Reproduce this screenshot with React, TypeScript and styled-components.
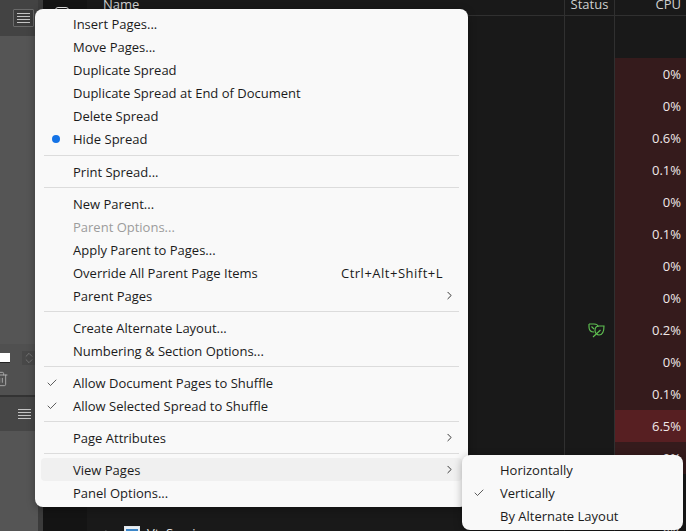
import { Fragment } from "react";
import styled, { createGlobalStyle } from "styled-components";
import { Check, ChevronRight, ChevronsUpDown, Trash2 } from "lucide-react";

type MenuEntry = {
  label: string;
  disabled?: boolean;
  mark?: "dot" | "check";
  shortcut?: string;
  submenu?: boolean;
  active?: boolean;
};

const menuGroups: MenuEntry[][] = [
  [
    { label: "Insert Pages..." },
    { label: "Move Pages..." },
    { label: "Duplicate Spread" },
    { label: "Duplicate Spread at End of Document" },
    { label: "Delete Spread" },
    { label: "Hide Spread", mark: "dot" },
  ],
  [{ label: "Print Spread..." }],
  [
    { label: "New Parent..." },
    { label: "Parent Options...", disabled: true },
    { label: "Apply Parent to Pages..." },
    { label: "Override All Parent Page Items", shortcut: "Ctrl+Alt+Shift+L" },
    { label: "Parent Pages", submenu: true },
  ],
  [{ label: "Create Alternate Layout..." }, { label: "Numbering & Section Options..." }],
  [
    { label: "Allow Document Pages to Shuffle", mark: "check" },
    { label: "Allow Selected Spread to Shuffle", mark: "check" },
  ],
  [{ label: "Page Attributes", submenu: true }],
  [{ label: "View Pages", submenu: true, active: true }, { label: "Panel Options..." }],
];

const cpuValues = ["0%", "0%", "0.6%", "0.1%", "0%", "0.1%", "0%", "0%", "0.2%", "0%", "0.1%", "6.5%", "0%", "0%"];

function LeafIcon() {
  return (
    <LeafSvg width="17" height="15" viewBox="0 0 17 15" fill="none" stroke="#5fc052" strokeWidth="1.15">
      <path d="M1 1h5c3 0 4 1.500 4 3" />
      <path d="M1 1v3c0 3 2 5 5 5" />
      <path d="M3.500 3.500L6 6" />
      <path d="M16 3h-5C8 3 7 5 7 7.500 7 10 9 12 11 12c3 0 5-3 5-9z" />
      <path d="M5 14l7.500-7" />
    </LeafSvg>
  );
}

function ServiceIcon() {
  return (
    <svg width="16" height="14" viewBox="0 0 16 14">
      <rect x="0.500" y="0.500" width="15" height="13" fill="#e8eef4" stroke="#dfe5ea" />
      <rect x="2" y="3" width="12" height="9" fill="#3b86c8" />
      <rect x="4" y="5" width="3" height="3" fill="#e8eef4" />
    </svg>
  );
}

function HamburgerLines() {
  return (
    <Lines>
      <i />
      <i />
      <i />
      <i />
    </Lines>
  );
}

export default function App() {
  return (
    <Screen>
      <GlobalStyle />
      <SidePanel>
        <PanelBar>
          <BoxedButton>
            <HamburgerLines />
          </BoxedButton>
        </PanelBar>
        <PanelBody $height={308} />
        <PanelControls>
          <InputRow>
            <PageInput />
            <Stepper>
              <ChevronsUpDown size={14} strokeWidth={1} />
            </Stepper>
          </InputRow>
          <TrashWrap>
            <Trash2 size={16} strokeWidth={1.3} />
          </TrashWrap>
        </PanelControls>
        <PanelBar $lower>
          <HamburgerLines />
        </PanelBar>
        <PanelBody />
      </SidePanel>
      <Gutter />
      <IconRail>
        <RailIcon />
      </IconRail>
      <Table>
        <HeaderRow>
          <HeaderCell>Name</HeaderCell>
          <HeaderCell $center $line>Status</HeaderCell>
          <HeaderCell $right $line>CPU</HeaderCell>
        </HeaderRow>
        <Row $height={42}>
          <span />
          <StatusCell />
          <CpuCell />
        </Row>
        {cpuValues.slice(0, 13).map((value, i) => (
          <Row key={i}>
            <span />
            <StatusCell>{i === 8 && <LeafIcon />}</StatusCell>
            <CpuCell $level={i === 11 ? "high" : "low"}>{value}</CpuCell>
          </Row>
        ))}
        <Row $height={43}>
          <span />
          <StatusCell />
          <CpuCell />
        </Row>
        <Row>
          <NameCell>
            <ChevronRight size={11} color="#8a8a8a" />
            <ServiceIcon />
            <span>VtyService</span>
          </NameCell>
          <StatusCell />
          <CpuCell>{cpuValues[13]}</CpuCell>
        </Row>
      </Table>

      <MainMenu>
        {menuGroups.map((group, g) => (
          <Fragment key={g}>
            {g > 0 && <Separator $wide={g === 1} />}
            {group.map((item) => (
              <MenuItem key={item.label} $disabled={item.disabled} $active={item.active}>
                <MarkSlot>
                  {item.mark === "dot" && <Dot />}
                  {item.mark === "check" && <Check size={12} strokeWidth={1.4} />}
                </MarkSlot>
                <ItemLabel>{item.label}</ItemLabel>
                {item.shortcut && <Shortcut>{item.shortcut}</Shortcut>}
                {item.submenu && (
                  <ArrowSlot>
                    <ChevronRight size={13} strokeWidth={1.6} />
                  </ArrowSlot>
                )}
              </MenuItem>
            ))}
          </Fragment>
        ))}
      </MainMenu>

      <SubMenu>
        <SubItem>
          <SubMark />
          Horizontally
        </SubItem>
        <SubItem>
          <SubMark>
            <Check size={12} strokeWidth={1.4} />
          </SubMark>
          Vertically
        </SubItem>
        <SubItem>
          <SubMark />
          By Alternate Layout
        </SubItem>
      </SubMenu>
    </Screen>
  );
}

// =================== Styled Components ===================

const GlobalStyle = createGlobalStyle`
  html, body {
    margin: 0;
    padding: 0;
    background: #191919;
  }
`;

const Screen = styled.div`
  position: relative;
  display: flex;
  width: 686px;
  height: 531px;
  overflow: hidden;
  background: #191919;
  font-family: "Open Sans", "Noto Sans", sans-serif;
  font-size: 13px;
`;

const SidePanel = styled.div`
  width: 38px;
  flex: none;
  display: flex;
  flex-direction: column;
  background: #535353;
`;

const PanelBar = styled.div<{ $lower?: boolean }>`
  height: 36px;
  flex: none;
  display: flex;
  align-items: center;
  justify-content: flex-end;
  padding-right: ${({ $lower }) => ($lower ? "7px" : "4px")};
  box-sizing: border-box;
  background: ${({ $lower }) => ($lower ? "#464646" : "#434343")};
  border-top: ${({ $lower }) => ($lower ? "2px solid #333" : "none")};
`;

const BoxedButton = styled.div`
  width: 21px;
  height: 18px;
  display: flex;
  align-items: center;
  justify-content: center;
  border: 1px solid #6a6a6a;
  background: #3c3c3c;
  box-sizing: border-box;
  border-radius: 1px;
`;

const Lines = styled.div`
  width: 13px;
  display: flex;
  flex-direction: column;
  gap: 2px;

  i {
    display: block;
    height: 1px;
    background: #c4c4c4;
  }
`;

const PanelBody = styled.div<{ $height?: number }>`
  flex: ${({ $height }) => ($height ? `0 0 ${$height}px` : "1")};
  background: #555;
`;

const PanelControls = styled.div`
  height: 51px;
  flex: none;
  display: flex;
  flex-direction: column;
  gap: 6px;
  padding-top: 7px;
  box-sizing: border-box;
  background: #505050;
  overflow: hidden;
`;

const InputRow = styled.div`
  display: flex;
  align-items: center;
  gap: 12px;
`;

const PageInput = styled.div`
  width: 10px;
  height: 9px;
  background: #fff;
  border-bottom: 1px solid #222;
`;

const Stepper = styled.div`
  display: flex;
  background: #484848;
  color: #939393;
`;

const TrashWrap = styled.div`
  margin-left: -7px;
  color: #b4b4b4;
  display: flex;
`;

const Gutter = styled.div`
  width: 5px;
  flex: none;
  background: #3b3b3b;
`;

const IconRail = styled.div`
  width: 44px;
  flex: none;
  background: #141414;
`;

const RailIcon = styled.div`
  width: 12px;
  height: 12px;
  margin: 7px 0 0 12px;
  border: 1px solid #e8e8e8;
  border-radius: 3px;
`;

const Table = styled.div`
  flex: 1;
  display: flex;
  flex-direction: column;
  color: #e6e6e6;
`;

const HeaderRow = styled.div`
  display: grid;
  grid-template-columns: 1fr 50px 72px;
  height: 16px;
  flex: none;
  box-sizing: border-box;
  border-bottom: 1px solid #303030;
  background: #191919;
  overflow: hidden;
`;

const HeaderCell = styled.div<{ $center?: boolean; $right?: boolean; $line?: boolean }>`
  display: flex;
  align-items: flex-end;
  height: 15px;
  box-sizing: border-box;
  line-height: 18px;
  padding-bottom: 2px;
  padding-left: ${({ $center, $right }) => ($center || $right ? "0" : "16px")};
  padding-right: ${({ $right }) => ($right ? "5px" : "0")};
  justify-content: ${({ $center, $right }) => ($center ? "center" : $right ? "flex-end" : "flex-start")};
  border-left: ${({ $line }) => ($line ? "1px solid #303030" : "none")};
  color: #cfcfcf;
`;

const Row = styled.div<{ $height?: number }>`
  display: grid;
  grid-template-columns: 1fr 50px 72px;
  height: ${({ $height }) => $height ?? 32}px;
  flex: none;
`;

const NameCell = styled.div`
  display: flex;
  align-items: center;
  padding-left: 15px;
  gap: 7px;

  svg:first-child {
    margin-right: 4px;
  }
`;

const StatusCell = styled.div`
  display: flex;
  align-items: center;
  justify-content: center;
  border-left: 1px solid #303030;
`;

const LeafSvg = styled.svg`
  margin-left: 14px;
`;

const CpuCell = styled.div<{ $level?: "low" | "high" }>`
  display: flex;
  align-items: center;
  justify-content: flex-end;
  padding-right: 5px;
  border-left: 1px solid #303030;
  color: #f0e8e8;
  background: ${({ $level }) =>
    $level === "high" ? "#571f22" : $level === "low" ? "#351b1c" : "transparent"};
`;

const MainMenu = styled.div`
  position: absolute;
  left: 35px;
  top: 9px;
  width: 433px;
  height: 498px;
  box-sizing: border-box;
  padding: 3px 6px 0;
  background: #f9f9f9;
  border-radius: 8px;
  box-shadow: 0 2px 8px rgba(0, 0, 0, 0.3);
  color: #1b1b1b;
`;

const Separator = styled.div<{ $wide?: boolean }>`
  height: 1px;
  margin: ${({ $wide }) => ($wide ? "4.5px 3px" : "4px 3px")};
  background: #dcdcdc;
`;

const MenuItem = styled.div<{ $disabled?: boolean; $active?: boolean }>`
  display: flex;
  align-items: center;
  height: 23px;
  border-radius: 4px;
  color: ${({ $disabled }) => ($disabled ? "#9c9c9c" : "inherit")};
  background: ${({ $active }) => ($active ? "#f0f0f0" : "transparent")};
`;

const MarkSlot = styled.div`
  width: 32px;
  flex: none;
  display: flex;
  justify-content: center;
  box-sizing: border-box;
  padding-right: 10px;
`;

const Dot = styled.div`
  width: 8px;
  height: 8px;
  margin-left: 8px;
  border-radius: 50%;
  background: #1473e6;
`;

const ItemLabel = styled.span`
  flex: 1;
  white-space: nowrap;
`;

const Shortcut = styled.span`
  margin-right: 19px;
  letter-spacing: 0.5px;
`;

const ArrowSlot = styled.div`
  display: flex;
  margin-right: 6px;
`;

const SubMenu = styled.div`
  position: absolute;
  left: 462px;
  top: 455px;
  width: 221px;
  height: 75px;
  box-sizing: border-box;
  padding: 3px 0 0;
  background: #f9f9f9;
  border-radius: 8px;
  box-shadow: 0 2px 8px rgba(0, 0, 0, 0.3);
  color: #1b1b1b;
`;

const SubItem = styled.div`
  display: flex;
  align-items: center;
  height: 23px;
  white-space: nowrap;
`;

const SubMark = styled.div`
  width: 38px;
  flex: none;
  display: flex;
  justify-content: center;
  box-sizing: border-box;
  padding-right: 4px;
`;
